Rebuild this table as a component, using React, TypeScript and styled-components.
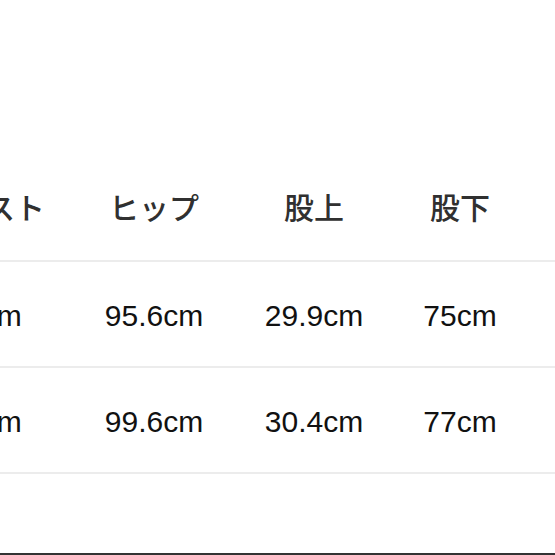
import React from "react";
import styled, { createGlobalStyle } from "styled-components";

const Global = createGlobalStyle`
  html, body { margin: 0; padding: 0; background: #ffffff; }
  body { width: 555px; height: 555px; overflow: hidden; }
`;

const Page = styled.div`
  width: 555px;
  height: 555px;
  display: flex;
  flex-direction: column;
  background: #ffffff;
  overflow: hidden;
`;

const Table = styled.div`
  margin-top: 156px;
  margin-left: -110px;
  display: flex;
  flex-direction: column;
`;

const Row = styled.div`
  display: grid;
  grid-template-columns: 190px 148px 172px 120px 1fr;
  height: 104px;
  align-items: center;
  border-bottom: 2px solid #ececec;
`;

const HeadCell = styled.div`
  text-align: center;
  font-family: "Noto Sans CJK JP", "Noto Sans", sans-serif;
  font-size: 30px;
  font-weight: 500;
  color: #303030;
  white-space: nowrap;
  padding-bottom: 4px;
`;

const Cell = styled.div`
  text-align: center;
  font-family: "Liberation Sans", Arial, sans-serif;
  font-size: 30px;
  color: #111111;
  white-space: nowrap;
  padding-top: 3px;
`;

const Spacer = styled.div`
  flex: 1;
`;

const BottomBar = styled.div`
  height: 2px;
  background: #333333;
`;

const headers = ["ウエスト", "ヒップ", "股上", "股下"];
const rows = [
  ["70cm", "95.6cm", "29.9cm", "75cm"],
  ["72cm", "99.6cm", "30.4cm", "77cm"],
];

export default function App() {
  return (
    <Page>
      <Global />
      <Table>
        <Row>
          {headers.map((h) => (
            <HeadCell key={h}>{h}</HeadCell>
          ))}
          <HeadCell />
        </Row>
        {rows.map((r, i) => (
          <Row key={i}>
            {r.map((v, j) => (
              <Cell key={j}>{v}</Cell>
            ))}
            <Cell />
          </Row>
        ))}
      </Table>
      <Spacer />
      <BottomBar />
    </Page>
  );
}
